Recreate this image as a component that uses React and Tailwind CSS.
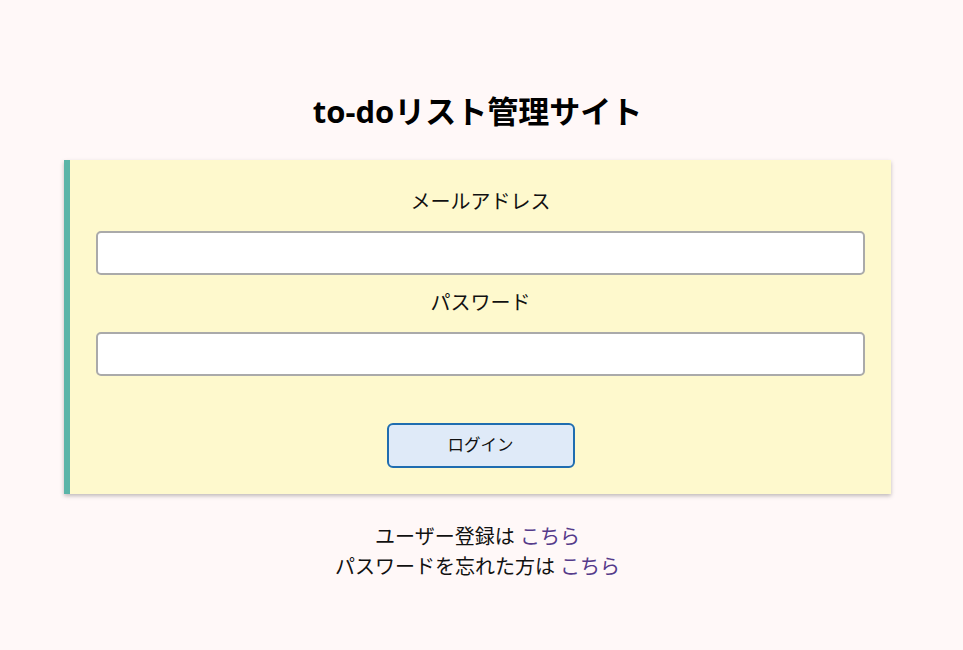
export default function App() {
  return (
    <div
      className="min-h-screen bg-[#fff8f8] text-[#111]"
      style={{ fontFamily: '"Open Sans", "Noto Sans CJK JP", sans-serif' }}
    >
      <div className="w-[955px] pt-[89px] flex flex-col items-center">
        <h1 className="text-[31px] leading-[44px] font-bold text-black">to-doリスト管理サイト</h1>

        {/* Login card */}
        <div className="mt-[27px] w-[827px] bg-[#fef9cd] border-l-[6px] border-[#5bb5a8] shadow-[0_2px_4px_rgba(0,0,0,0.25)] pt-[28px] pb-[26px] px-[26px] flex flex-col items-center">
          <label className="text-[20px] leading-[27px] mb-[16px]">メールアドレス</label>
          <input
            type="email"
            className="w-full h-[44px] bg-white border-2 border-[#aaa] rounded-[5px] px-2 outline-none"
          />
          <label className="text-[20px] leading-[27px] mt-[14px] mb-[16px]">パスワード</label>
          <input
            type="password"
            className="w-full h-[44px] bg-white border-2 border-[#aaa] rounded-[5px] px-2 outline-none"
          />
          <button className="mt-[47px] w-[188px] h-[45px] bg-[#dfeaf8] border-2 border-[#1f6db0] rounded-[6px] text-[16.5px]">
            ログイン
          </button>
        </div>

        <div className="mt-[28px] text-[20px] leading-[30px] text-center">
          <p>
            ユーザー登録は <a href="#" className="text-[#553a8a]">こちら</a>
          </p>
          <p>
            パスワードを忘れた方は <a href="#" className="text-[#553a8a]">こちら</a>
          </p>
        </div>
      </div>
    </div>
  );
}
